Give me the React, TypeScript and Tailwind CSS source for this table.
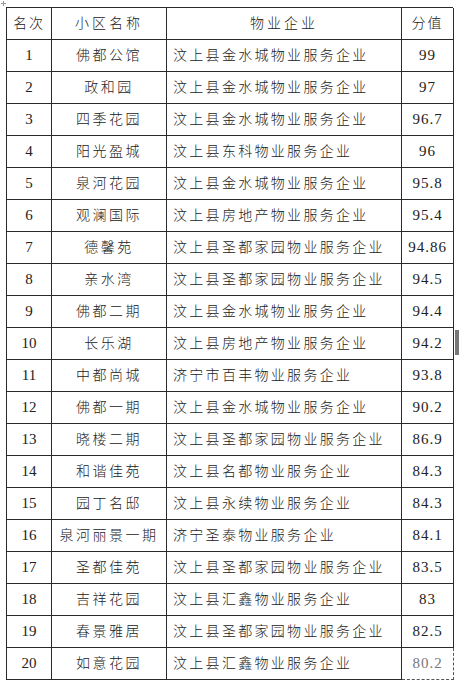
import React from "react";

const rows: [string, string, string, string][] = [
  ["1", "佛都公馆", "汶上县金水城物业服务企业", "99"],
  ["2", "政和园", "汶上县金水城物业服务企业", "97"],
  ["3", "四季花园", "汶上县金水城物业服务企业", "96.7"],
  ["4", "阳光盈城", "汶上县东科物业服务企业", "96"],
  ["5", "泉河花园", "汶上县金水城物业服务企业", "95.8"],
  ["6", "观澜国际", "汶上县房地产物业服务企业", "95.4"],
  ["7", "德馨苑", "汶上县圣都家园物业服务企业", "94.86"],
  ["8", "亲水湾", "汶上县圣都家园物业服务企业", "94.5"],
  ["9", "佛都二期", "汶上县金水城物业服务企业", "94.4"],
  ["10", "长乐湖", "汶上县房地产物业服务企业", "94.2"],
  ["11", "中都尚城", "济宁市百丰物业服务企业", "93.8"],
  ["12", "佛都一期", "汶上县金水城物业服务企业", "90.2"],
  ["13", "晓楼二期", "汶上县圣都家园物业服务企业", "86.9"],
  ["14", "和谐佳苑", "汶上县名都物业服务企业", "84.3"],
  ["15", "园丁名邸", "汶上县永续物业服务企业", "84.3"],
  ["16", "泉河丽景一期", "济宁圣泰物业服务企业", "84.1"],
  ["17", "圣都佳苑", "汶上县圣都家园物业服务企业", "83.5"],
  ["18", "吉祥花园", "汶上县汇鑫物业服务企业", "83"],
  ["19", "春景雅居", "汶上县圣都家园物业服务企业", "82.5"],
  ["20", "如意花园", "汶上县汇鑫物业服务企业", "80.2"],
];

const font = {
  fontFamily: '"Liberation Serif", "Noto Sans CJK SC", serif',
};

export default function App() {
  return (
    <div className="relative w-[459px] h-[688px] bg-white text-[#222]" style={font}>
      <div className="absolute left-[1px] top-[1px] w-[5px] h-[5px]">
        <div className="absolute left-[2px] top-0 w-[1px] h-[5px] bg-[#999]" />
        <div className="absolute left-0 top-[2px] w-[5px] h-[1px] bg-[#999]" />
      </div>
      <div className="pt-[7px] pl-[6px]">
        <div className="grid grid-cols-[45px_115px_235px_52px] w-[447px] border-l border-t border-[#2a2a2a]">
          <div className="h-[32px] border-r border-b border-[#2a2a2a] flex items-center justify-center text-[14px] tracking-[2px] font-light">名次</div>
          <div className="h-[32px] border-r border-b border-[#2a2a2a] flex items-center justify-center text-[14px] tracking-[3px] font-light">小区名称</div>
          <div className="h-[32px] border-r border-b border-[#2a2a2a] flex items-center justify-center text-[14px] tracking-[3px] font-light">物业企业</div>
          <div className="h-[32px] border-r border-b border-[#2a2a2a] flex items-center justify-center text-[14px] tracking-[2px] font-light">分值</div>
          {rows.map((r, i) => {
            const last = i === rows.length - 1;
            return (
              <React.Fragment key={i}>
                <div className="h-[32px] border-r border-b border-[#2a2a2a] flex items-center justify-center text-[15px]">{r[0]}</div>
                <div className="h-[32px] border-r border-b border-[#2a2a2a] flex items-center justify-center text-[14px] tracking-[2.5px] font-light whitespace-nowrap">{r[1]}</div>
                <div className="h-[32px] border-r border-b border-[#2a2a2a] flex items-center pl-[6px] text-[14px] tracking-[2.3px] font-light whitespace-nowrap">{r[2]}</div>
                <div
                  className={
                    last
                      ? "h-[32px] border-r border-b border-dashed border-[#555] flex items-center justify-center text-[15px] tracking-[1px] text-[#777]"
                      : "h-[32px] border-r border-b border-[#2a2a2a] flex items-center justify-center text-[15px] tracking-[1px]"
                  }
                >
                  {r[3]}
                </div>
              </React.Fragment>
            );
          })}
        </div>
      </div>
      <div className="absolute left-[455px] top-[330px] w-[4px] h-[25px] bg-[#777]" />
    </div>
  );
}
